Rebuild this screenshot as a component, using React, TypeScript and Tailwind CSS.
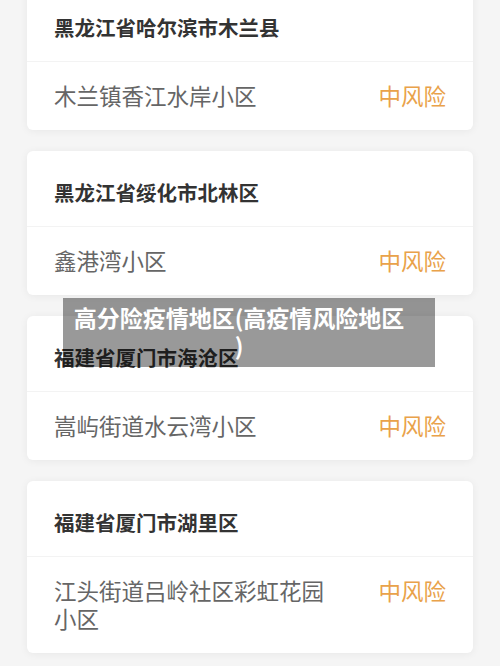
const areas = [
  { city: "黑龙江省哈尔滨市木兰县", place: "木兰镇香江水岸小区", level: "中风险" },
  { city: "黑龙江省绥化市北林区", place: "鑫港湾小区", level: "中风险" },
  { city: "福建省厦门市海沧区", place: "嵩屿街道水云湾小区", level: "中风险" },
  { city: "福建省厦门市湖里区", place: "江头街道吕岭社区彩虹花园小区", level: "中风险" },
];

function AreaCard({ city, place, level }: any) {
  return (
    <div className="bg-white rounded-md shadow-[0_1px_8px_rgba(0,0,0,0.06)]">
      <div className="h-[75px] px-[27px] pt-[28px] text-[20.5px] leading-[26px] font-bold text-[#333]">
        {city}
      </div>
      <div className="border-t border-[#f3f3f3] px-[27px] pt-[19px] pb-[21px] flex items-start justify-between">
        <div className="w-[285px] text-[22.5px] leading-[28px] text-[#666]">{place}</div>
        <div className="text-[22.5px] leading-[28px] text-[#e9a24a]">{level}</div>
      </div>
    </div>
  );
}

export default function App() {
  return (
    <div
      className="relative w-[500px] h-[666px] overflow-hidden bg-[#f5f5f5]"
      style={{ fontFamily: '"Noto Sans CJK SC", "Noto Sans", sans-serif' }}
    >
      <div className="px-[27px] mt-[-14px] flex flex-col gap-[21px]">
        {areas.map((a, i) => (
          <AreaCard key={i} {...a} />
        ))}
      </div>

      {/* caption over the screenshot */}
      <div className="absolute left-[63px] top-[298px] w-[372px] h-[69px] bg-black/40 pl-[8px] pt-[5px]">
        <div className="w-[336px] text-center text-[23px] leading-[28px] font-bold text-white [line-break:anywhere]">
          高分险疫情地区(高疫情风险地区)
        </div>
      </div>
    </div>
  );
}
